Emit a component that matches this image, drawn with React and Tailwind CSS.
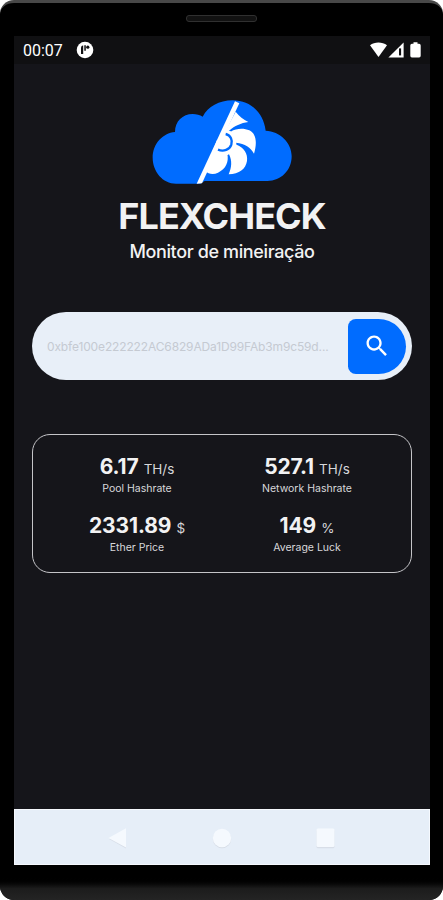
const stats = [
  { value: '6.17', unit: 'TH/s', label: 'Pool Hashrate' },
  { value: '527.1', unit: 'TH/s', label: 'Network Hashrate' },
  { value: '2331.89', unit: '$', label: 'Ether Price' },
  { value: '149', unit: '%', label: 'Average Luck' },
];

const StatusBar = () => (
  <div className="flex h-7 items-center bg-[#101012] pl-[9px] pr-[8px] text-white">
    <span className="w-[42px] whitespace-nowrap pt-[2px] font-['Roboto',sans-serif] text-[16px] leading-none">00:07</span>
    <svg viewBox="0 0 18 18" className="ml-[11px] h-[18px] w-[18px]">
      <circle cx="9" cy="9" r="8.3" fill="#fff" />
      <path d="M5 6.4Q5.4 4.4 7.2 4.6V13H5z" fill="#101012" />
      <path d="M8.3 4.2h1.5v5.6H8.3z" fill="#101012" />
      <circle cx="11.8" cy="6.2" r="1.6" fill="#101012" />
    </svg>
    <svg viewBox="0 0 52 18" className="ml-auto h-[18px] w-[52px]" fill="#fff">
      <path d="M0 4.3C4.4 .6 12.4 .6 17 4.3L8.5 16z" />
      <path d="M18.4 16.4L33.6 1.4V16.4z" />
      <path d="M29 7.4h2.1v7H29z" fill="#101012" />
      <path d="M43.5 1.2h4v1.6h1.6q1.6 0 1.6 1.6v10.4q0 1.6-1.6 1.6h-7.2q-1.6 0-1.6-1.6V4.4q0-1.6 1.6-1.6h1.6z" />
    </svg>
  </div>
);

const Logo = () => (
  <svg viewBox="0 0 495 300" className="h-[100px] w-[165px]">
    <path
      d="M108 281C68 281 38 244 38 203C38 162 68 129 105 126C105 94 128 72 158 72C169 72 180 75 188 80C204 50 237 31 278 31C332 31 370 68 377 122C420 124 455 158 455 199C455 241 423 273 382 273H194L181 281Z"
      fill="#006cff"
    />
    <g fill="#fff">
      <path d="M285 34L298 40L186 280L170 281Z" />
      {/* fan blades, overlapping at the hub */}
      <path d="M287 65C298 80 310 88 325 96C303 99 283 108 269 121L250 135Z" />
      <path d="M250 121L272 125C290 114 312 114 328 121C352 133 350 165 342 191C332 172 315 161 288 158L260 160Z" />
      <path d="M284 158L290 164C312 173 324 191 321 213C317 237 298 252 266 253C275 234 277 212 267 193L250 170Z" />
      <path d="M231 150L262 192C267 215 258 237 234 248C220 255 205 252 196 244Z" />
      <path d="M250 118L272 124L288 142L289 162L277 182L264 195L236 196L228 184Z" />
    </g>
    <path d="M257 132C273 136 278 151 274 164C269 179 251 186 234 179" fill="none" stroke="#006cff" strokeWidth="7" />
  </svg>
);

const SearchBar = () => (
  <div className="mx-[18px] mt-[48px] flex h-[68px] items-center rounded-full bg-[#e8eff8] pl-[15px] pr-[6px]">
    <span className="w-[283px] whitespace-nowrap pt-px font-['Inter',sans-serif] text-[12px] leading-none tracking-[-0.14px] text-[#c5cad2]">
      0xbfe100e222222AC6829ADa1D99FAb3m9c59d...
    </span>
    <button className="ml-auto flex h-[55px] w-[58px] items-center justify-center rounded-l-[8px] rounded-r-[28px] bg-[#006cff]">
      <svg viewBox="0 0 24 24" className="-ml-px h-7 w-7" fill="#fff">
        <path d="M15.5 14h-.79l-.28-.27C15.41 12.59 16 11.11 16 9.5 16 5.91 13.09 3 9.5 3S3 5.91 3 9.5 5.91 16 9.5 16c1.61 0 3.09-.59 4.23-1.57l.27.28v.79l5 4.99L20.49 19l-4.99-5zm-6 0C7.01 14 5 11.99 5 9.5S7.01 5 9.5 5 14 7.01 14 9.5 11.99 14 9.5 14z" />
      </svg>
    </button>
  </div>
);

const Stat = ({ value, unit, label }) => (
  <div className="flex h-[58.5px] flex-col items-center whitespace-nowrap">
    <p className="flex h-6 items-baseline gap-[5px] leading-6">
      <span className="text-[21px] font-bold tracking-[-0.1px]">{value}</span>
      <span className="text-[13.5px] text-[#d8d8da]">{unit}</span>
    </p>
    <p className="mt-[3px] text-[10.5px] leading-[14px] text-[#d8d8da]">{label}</p>
  </div>
);

const NavBar = () => (
  <div className="mt-auto flex h-14 justify-center border border-[#f6f9fe] bg-[#e6eef8] pt-[17px]">
    <svg viewBox="0 0 230 22" className="h-[22px] w-[230px]" fill="#f5f9fe">
      <path d="M2 12L19 2V21.5Z" fill="#d8dee8" />
      <path d="M1.5 11L19 1.3V20.5Z" />
      <circle cx="115" cy="12" r="9.2" fill="#d8dee8" />
      <circle cx="115" cy="11" r="9.2" />
      <rect x="209.5" y="2.5" width="18" height="18.7" rx="1.5" fill="#d8dee8" />
      <rect x="209.5" y="1.5" width="18" height="18.5" rx="1.5" />
    </svg>
  </div>
);

export default function App() {
  return (
    <div className="h-[900px] w-[443px] overflow-hidden bg-white">
      <div className="flex h-full flex-col rounded-[14px] border-t-[3px] border-[#484848] bg-black font-['Inter',sans-serif]">
        <div className="flex h-[33px] shrink-0 justify-center pt-[12px]">
          <div className="h-[7px] w-[71px] rounded-[3px] border border-[#303030] bg-[#121212]" />
        </div>
        <main className="ml-[14px] flex h-[829px] w-[416px] shrink-0 flex-col bg-[#15151a] text-[#f2f2f3]">
          <StatusBar />
          <header className="mt-[26px] flex flex-col items-center">
            <Logo />
            <h1 className="mt-[4px] text-[36px] font-bold leading-[44px] tracking-[-0.95px]">FLEXCHECK</h1>
            <p className="mt-[2px] text-[18px] font-medium leading-6 tracking-[-0.37px]">Monitor de mineiração</p>
          </header>
          <SearchBar />
          <section className="mx-[18px] mt-[54px] grid h-[139px] grid-cols-2 content-start rounded-[18px] border-[1.5px] border-[#c4c4c8] pl-[19px] pr-[19px] pt-5">
            {stats.map((s) => (
              <Stat key={s.label} {...s} />
            ))}
          </section>
          <NavBar />
        </main>
        <div className="mt-3 flex-1 rounded-b-[14px] bg-gradient-to-b from-black via-[#1c1c1c] to-[#242424]" />
      </div>
    </div>
  );
}
